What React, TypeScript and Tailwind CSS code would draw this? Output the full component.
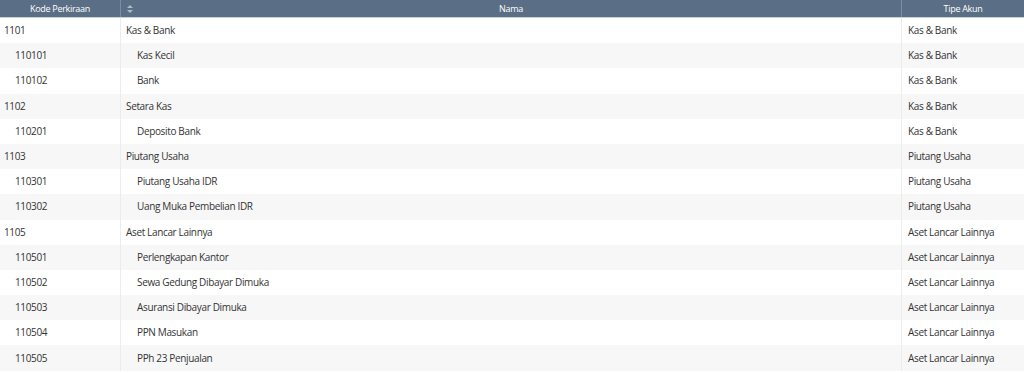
import React from 'react'

type Akun = { kode: string; nama: string; tipe: string; child?: boolean }

const rows: Akun[] = [
  { kode: '1101', nama: 'Kas & Bank', tipe: 'Kas & Bank' },
  { kode: '110101', nama: 'Kas Kecil', tipe: 'Kas & Bank', child: true },
  { kode: '110102', nama: 'Bank', tipe: 'Kas & Bank', child: true },
  { kode: '1102', nama: 'Setara Kas', tipe: 'Kas & Bank' },
  { kode: '110201', nama: 'Deposito Bank', tipe: 'Kas & Bank', child: true },
  { kode: '1103', nama: 'Piutang Usaha', tipe: 'Piutang Usaha' },
  { kode: '110301', nama: 'Piutang Usaha IDR', tipe: 'Piutang Usaha', child: true },
  { kode: '110302', nama: 'Uang Muka Pembelian IDR', tipe: 'Piutang Usaha', child: true },
  { kode: '1105', nama: 'Aset Lancar Lainnya', tipe: 'Aset Lancar Lainnya' },
  { kode: '110501', nama: 'Perlengkapan Kantor', tipe: 'Aset Lancar Lainnya', child: true },
  { kode: '110502', nama: 'Sewa Gedung Dibayar Dimuka', tipe: 'Aset Lancar Lainnya', child: true },
  { kode: '110503', nama: 'Asuransi Dibayar Dimuka', tipe: 'Aset Lancar Lainnya', child: true },
  { kode: '110504', nama: 'PPN Masukan', tipe: 'Aset Lancar Lainnya', child: true },
  { kode: '110505', nama: 'PPh 23 Penjualan', tipe: 'Aset Lancar Lainnya', child: true },
]

const SortIcon = () => (
  <svg width="6" height="8" viewBox="0 0 6 8" className="fill-[#aebbc9]">
    <path d="M3 0 L6 3 L0 3 Z" />
    <path d="M0 5 L6 5 L3 8 Z" />
  </svg>
)

export default function App() {
  return (
    <div className="w-[1024px] bg-white font-['Open_Sans',sans-serif] text-[#333]">
      <div className="grid grid-cols-[121px_781px_122px] h-[18px] bg-[#5a6e85] text-white text-[9px] tracking-[-0.3px] border-b border-[#c9d1da]">
        <div className="flex items-center justify-center border-r border-[#7d8ea2]">Kode Perkiraan</div>
        <div className="relative flex items-center justify-center border-r border-[#7d8ea2]">
          <span className="absolute left-[6px] top-[5px]">
            <SortIcon />
          </span>
          Nama
        </div>
        <div className="flex items-center justify-center">Tipe Akun</div>
      </div>
      {rows.map((r, i) => (
        <div
          key={r.kode}
          className={`grid grid-cols-[121px_781px_122px] h-[25.2px] text-[10px] tracking-[-0.35px] ${i % 2 === 1 ? 'bg-[#f7f7f7]' : 'bg-white'}`}
        >
          <div className={`flex items-center border-r border-[#ececec] ${r.child ? 'pl-[15px]' : 'pl-[4px]'}`}>{r.kode}</div>
          <div className={`flex items-center border-r border-[#ececec] ${r.child ? 'pl-[16px]' : 'pl-[5px]'}`}>{r.nama}</div>
          <div className="flex items-center pl-[6px]">{r.tipe}</div>
        </div>
      ))}
    </div>
  )
}
